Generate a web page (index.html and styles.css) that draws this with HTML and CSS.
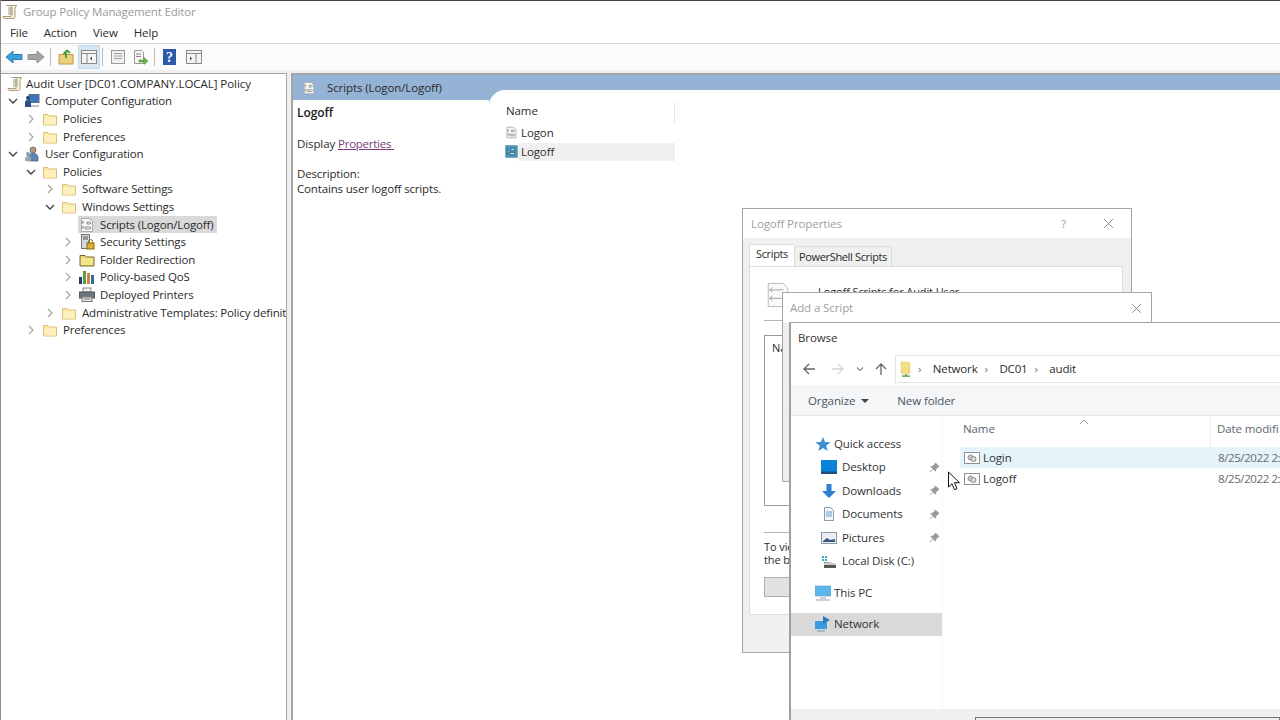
FILE: index.html
```html
<!DOCTYPE html>
<html lang="en">
<head>
<meta charset="utf-8">
<title>Group Policy Management Editor</title>
<link rel="stylesheet" href="styles.css">
</head>
<body>
<svg class="defs" width="0" height="0" aria-hidden="true">
  <defs>
    <symbol id="folder" viewBox="0 0 16 16">
      <path d="M1.500 3.500h4.500l1.500 1.500h7v9h-13z" fill="#fbe7a0" stroke="#d8c27a"/>
      <path d="M2 6h12v7.500H2z" fill="#fdf0bc"/>
    </symbol>
    <symbol id="script" viewBox="0 0 16 16">
      <path d="M2.500 1.500h8l3 3v10h-11z" fill="#f8f8f8" stroke="#a8a8a8"/>
      <path d="M5 4.500H3.800v2.500M5 9.500H3.800v2.500M8 5h3l1 1-1 1H8zM6 10h5l1 1-1 1H6z" fill="none" stroke="#8d8d8d"/>
    </symbol>
    <symbol id="scriptsel" viewBox="0 0 16 16">
      <rect x="1" y="1" width="14" height="14" fill="#4f9fc0" stroke="#2f7f9f"/>
      <path d="M4 4.500H3v2.500M4 9.500H3v2.500M7 4h5v3H7zM6 9h6v3H6z" fill="#cfe8f2" stroke="#1d4f66"/>
    </symbol>
    <symbol id="scrollicon" viewBox="0 0 16 16">
      <path d="M4.500 1.500h10l-1.500 3v8c0 1.500-1 2-2 2h-8c-1.500 0-2-1-2-2h8V3c0-1 .5-1.500 1.500-1.500z" fill="#f7f2e2" stroke="#a89c7c"/>
      <path d="M6 4h5M6 6h5M6 8h5M6 10h5" stroke="#a89c7c"/>
    </symbol>
    <symbol id="computer" viewBox="0 0 16 16">
      <rect x="5" y="1.500" width="10" height="8" fill="#3f76b8" stroke="#5d6f85"/>
      <path d="M7 12h8v2H7z" fill="#b8c4d0"/>
      <circle cx="4" cy="5" r="2" fill="#24437a"/>
      <path d="M1 14V9c0-1 1-2 3-2s3 1 3 2v5z" fill="#2c4f8a"/>
    </symbol>
    <symbol id="users" viewBox="0 0 16 16">
      <circle cx="9" cy="4" r="3" fill="#b59a7a" stroke="#5d5048" stroke-width=".7"/>
      <path d="M4 15v-4c0-2 2-3.500 5-3.500s5 1.500 5 3.500v4z" fill="#5f87b5" stroke="#3f5c80" stroke-width=".7"/>
      <circle cx="4" cy="8" r="2" fill="#8b9bad"/>
      <path d="M1 15v-2.500C1 11 2.500 10 4 10s3 1 3 2.500V15z" fill="#9aa7b5"/>
    </symbol>
    <symbol id="lockserver" viewBox="0 0 16 16">
      <rect x="2.500" y=".5" width="8" height="14" fill="#d5d8dc" stroke="#777"/>
      <path d="M4 3h5M4 5h5" stroke="#555"/>
      <rect x="8" y="9" width="7" height="6" fill="#dcb13a" stroke="#8c6c12"/>
      <path d="M9.500 9V7.500a2 2 0 0 1 4 0V9" fill="none" stroke="#8c6c12"/>
    </symbol>
    <symbol id="redirect" viewBox="0 0 16 16">
      <path d="M1 3.500h5l1.500 1.500H15v9H1z" fill="#ecd772" stroke="#6f6a2e"/>
      <path d="M2 6h12v7H2z" fill="#f3e48e"/>
    </symbol>
    <symbol id="bars" viewBox="0 0 16 16">
      <rect x="0" y="8" width="3" height="7" fill="#1f3f66"/>
      <rect x="4" y="2" width="3" height="13" fill="#5c9c4c"/>
      <rect x="8" y="4" width="3" height="11" fill="#c88a3a"/>
      <rect x="12" y="6" width="3" height="9" fill="#2f6f9f"/>
    </symbol>
    <symbol id="printer" viewBox="0 0 16 16">
      <rect x="4" y="1" width="8" height="4" fill="#f4f4f4" stroke="#888"/>
      <rect x=".5" y="5" width="15" height="6" fill="#6d747a" stroke="#555"/>
      <rect x="3" y="10" width="10" height="4.500" fill="#e8e8e8" stroke="#777"/>
      <path d="M4.500 12h7" stroke="#777"/>
    </symbol>
    <symbol id="chev-r" viewBox="0 0 10 10"><path d="M3 1l4 4-4 4" fill="none" stroke="#a6a6a6" stroke-width="1.200"/></symbol>
    <symbol id="chev-d" viewBox="0 0 10 10"><path d="M1 3l4 4 4-4" fill="none" stroke="#404040" stroke-width="1.300"/></symbol>
    <symbol id="pin" viewBox="0 0 12 12"><path d="M7 1l4 4-1.500.5L7.500 8 7 10 2 5l2-.5 2.500-2zM4 8l-3 3" fill="#9a9a9a" stroke="#9a9a9a"/></symbol>
    <symbol id="share" viewBox="0 0 16 16">
      <path d="M3 1h4.500L11 1.500c.8 0 1 .5 1 1.500v7.500c0 1.500-.5 2.500-1.500 2.500h-6c-1 0-1.500-1-1.500-2.500z" fill="#f6de86" stroke="#dcc470" stroke-width=".5"/>
      <path d="M8 13v2M4 15.200h8" stroke="#3c9a3c" stroke-width="1.300"/>
    </symbol>
    <symbol id="batch" viewBox="0 0 16 16">
      <rect x=".5" y="2.500" width="15" height="11" fill="#fff" stroke="#909090"/>
      <circle cx="6.500" cy="7.500" r="2.500" fill="#ccc" stroke="#8a8a8a"/>
      <circle cx="9.500" cy="9" r="2.500" fill="#ddd" stroke="#8a8a8a"/>
    </symbol>
  </defs>
</svg>

<header class="titlebar">
  <svg class="ico16"><use href="#scrollicon"/></svg>
  <span>Group Policy Management Editor</span>
</header>
<nav class="menubar">
  <span>File</span><span>Action</span><span>View</span><span>Help</span>
</nav>
<div class="toolbar">
  <svg class="tool" viewBox="0 0 18 16"><path d="M1 8l7-6v3.500h9v5H8V14z" fill="#3aa0dc" stroke="#2b7fb5"/></svg>
  <svg class="tool" viewBox="0 0 18 16"><path d="M17 8l-7-6v3.500H1v5h9V14z" fill="#a5a5a5" stroke="#8c8c8c"/></svg>
  <i class="tsep"></i>
  <svg class="tool" viewBox="0 0 18 16"><path d="M2 5.500h14V15H2z" fill="#ecd27a" stroke="#b79d4c"/><path d="M9 9V3.500M6.500 5l3.500-3.500L13 4" fill="none" stroke="#4a9c3c" stroke-width="1.800"/></svg>
  <span class="tool-on"><svg class="tool" viewBox="0 0 18 16"><rect x="1.500" y="1.500" width="15" height="13" fill="#f4f4f4" stroke="#8a8a8a"/><path d="M1.500 4.500h15M7 4.500v10" stroke="#8a8a8a"/><path d="M12 7.500v4l-2-2z" fill="#445"/></svg></span>
  <i class="tsep"></i>
  <svg class="tool" viewBox="0 0 18 16"><rect x="2.500" y="1.500" width="13" height="13" fill="#eef1f4" stroke="#9a9a9a"/><path d="M5 4.500h8M5 7h8M5 9.500h8" stroke="#a0a0a0"/></svg>
  <svg class="tool" viewBox="0 0 18 16"><path d="M3.500 1.500h7l2 2v11h-9z" fill="#f6f6f6" stroke="#9a9a9a"/><path d="M5 5h5M5 7.500h5" stroke="#888"/><path d="M8 11h5V8.500l4 3.500-4 3.500V13H8z" fill="#6ab04c" stroke="#4c8a34" stroke-width=".5"/></svg>
  <i class="tsep"></i>
  <svg class="tool" viewBox="0 0 18 16"><rect x="2" y="0" width="13" height="16" fill="#2a5aa8"/><text x="8.500" y="13" class="helpq">?</text></svg>
  <svg class="tool tool-last" viewBox="0 0 18 16"><rect x="1.500" y="1.500" width="15" height="13" fill="#f4f4f4" stroke="#8a8a8a"/><path d="M1.500 4.500h15M11 4.500v10" stroke="#8a8a8a"/><path d="M5 7.500v4L7 9.500z" fill="#445"/></svg>
</div>

<main class="console">
  <section class="tree">
    <div class="row root"><svg class="ico16"><use href="#scrollicon"/></svg><span>Audit User [DC01.COMPANY.LOCAL] Policy</span></div>
    <div class="row d0"><svg class="chev"><use href="#chev-d"/></svg><svg class="ico16"><use href="#computer"/></svg><span>Computer Configuration</span></div>
    <div class="row d1"><svg class="chev"><use href="#chev-r"/></svg><svg class="ico16"><use href="#folder"/></svg><span>Policies</span></div>
    <div class="row d1"><svg class="chev"><use href="#chev-r"/></svg><svg class="ico16"><use href="#folder"/></svg><span>Preferences</span></div>
    <div class="row d0"><svg class="chev"><use href="#chev-d"/></svg><svg class="ico16"><use href="#users"/></svg><span>User Configuration</span></div>
    <div class="row d1"><svg class="chev"><use href="#chev-d"/></svg><svg class="ico16"><use href="#folder"/></svg><span>Policies</span></div>
    <div class="row d2"><svg class="chev"><use href="#chev-r"/></svg><svg class="ico16"><use href="#folder"/></svg><span>Software Settings</span></div>
    <div class="row d2"><svg class="chev"><use href="#chev-d"/></svg><svg class="ico16"><use href="#folder"/></svg><span>Windows Settings</span></div>
    <div class="row d3"><span class="chev"></span><span class="sel"><svg class="ico16"><use href="#script"/></svg><span>Scripts (Logon/Logoff)</span></span></div>
    <div class="row d3"><svg class="chev"><use href="#chev-r"/></svg><svg class="ico16"><use href="#lockserver"/></svg><span>Security Settings</span></div>
    <div class="row d3"><svg class="chev"><use href="#chev-r"/></svg><svg class="ico16"><use href="#redirect"/></svg><span>Folder Redirection</span></div>
    <div class="row d3"><svg class="chev"><use href="#chev-r"/></svg><svg class="ico16"><use href="#bars"/></svg><span>Policy-based QoS</span></div>
    <div class="row d3"><svg class="chev"><use href="#chev-r"/></svg><svg class="ico16"><use href="#printer"/></svg><span>Deployed Printers</span></div>
    <div class="row d2"><svg class="chev"><use href="#chev-r"/></svg><svg class="ico16"><use href="#folder"/></svg><span>Administrative Templates: Policy definit</span></div>
    <div class="row d1"><svg class="chev"><use href="#chev-r"/></svg><svg class="ico16"><use href="#folder"/></svg><span>Preferences</span></div>
  </section>

  <section class="pane">
    <div class="pane-head"><svg class="ico14"><use href="#script"/></svg><span>Scripts (Logon/Logoff)</span></div>
    <div class="pane-body">
      <div class="desc">
        <h2>Logoff</h2>
        <p class="display">Display <a class="link">Properties&nbsp;</a></p>
        <p class="about">Description:<br>Contains user logoff scripts.</p>
      </div>
      <div class="list">
        <div class="list-head"><span>Name</span></div>
        <div class="list-row"><svg class="ico13"><use href="#script"/></svg><span class="lbl">Logon</span></div>
        <div class="list-row"><svg class="ico13"><use href="#scriptsel"/></svg><span class="lbl on">Logoff</span></div>
      </div>
    </div>
  </section>
</main>

<section class="win props">
  <div class="win-title"><span>Logoff Properties</span><b class="q">?</b><svg class="x" viewBox="0 0 10 10"><path d="M0 0l10 10M10 0L0 10"/></svg></div>
  <div class="tabs"><span class="tab on">Scripts</span><span class="tab">PowerShell Scripts</span></div>
  <div class="page">
    <div class="page-head">
      <svg class="bigscript" viewBox="0 0 24 28"><path d="M1.500 1.500h16l5 5v20h-21z" fill="#fafafa" stroke="#b5b5b5"/><path d="M6 6L3 8.500 6 11M3 8.500h15M6 15l-3 2.500L6 20M3 17.500h15" fill="none" stroke="#9a9a9a"/></svg>
      <span>Logoff Scripts for Audit User</span>
    </div>
    <hr class="rule">
    <div class="scriptbox">Na</div>
    <hr class="rule rule2">
    <p class="hint">To vie<br>the bu</p>
    <div class="btn"></div>
  </div>
</section>

<section class="win add">
  <div class="win-title"><span>Add a Script</span><svg class="x" viewBox="0 0 10 10"><path d="M0 0l10 10M10 0L0 10"/></svg></div>
</section>

<section class="win browse">
  <div class="browse-title">Browse</div>
  <div class="nav">
    <svg class="navbtn" viewBox="0 0 14 14"><path d="M13 7H2M7 2L2 7l5 5" fill="none" stroke="#666" stroke-width="1.300"/></svg>
    <svg class="navbtn" viewBox="0 0 14 14"><path d="M1 7h11M7 2l5 5-5 5" fill="none" stroke="#d4d4d4" stroke-width="1.300"/></svg>
    <svg class="navdrop" viewBox="0 0 8 8"><path d="M1 2.500l3 3 3-3" fill="none" stroke="#888" stroke-width="1.100"/></svg>
    <svg class="navbtn up" viewBox="0 0 14 14"><path d="M7 13V2M2 7l5-5 5 5" fill="none" stroke="#666" stroke-width="1.300"/></svg>
    <div class="address">
      <svg class="ico16"><use href="#share"/></svg>
      <span class="crumb-sep">&rsaquo;</span><span>Network</span>
      <span class="crumb-sep">&rsaquo;</span><span>DC01</span>
      <span class="crumb-sep">&rsaquo;</span><span>audit</span>
    </div>
  </div>
  <div class="cmdbar">
    <span class="org">Organize<i class="caret"></i></span>
    <span>New folder</span>
  </div>
  <div class="explorer">
    <aside class="side">
      <div class="s-item top"><svg class="ico16" viewBox="0 0 16 16"><path d="M8 1l2 5 5.500.3-4.300 3.400 1.500 5.300L8 12l-4.700 3 1.500-5.300L.5 6.300 6 6z" fill="#3d8fd1"/></svg><span>Quick access</span></div>
      <div class="s-item sub"><svg class="ico16" viewBox="0 0 16 16"><rect y="1" width="16" height="13" fill="#0a84d8"/><path d="M0 12.500h16V15H0z" fill="#1d4f7a"/></svg><span>Desktop</span><svg class="pin"><use href="#pin"/></svg></div>
      <div class="s-item sub"><svg class="ico16" viewBox="0 0 16 16"><path d="M5.500 1h5v7H15l-7 7-7-7h4.500z" fill="#2f7fd0"/></svg><span>Downloads</span><svg class="pin"><use href="#pin"/></svg></div>
      <div class="s-item sub"><svg class="ico16" viewBox="0 0 16 16"><path d="M3.500 1.500h6l3 3v10h-9z" fill="#f4f6f8" stroke="#8a9aaa"/><path d="M5 6h6M5 8h6M5 10h6" stroke="#6b9cc8"/></svg><span>Documents</span><svg class="pin"><use href="#pin"/></svg></div>
      <div class="s-item sub"><svg class="ico16" viewBox="0 0 16 16"><rect x=".5" y="2.500" width="15" height="11" fill="#e8eef4" stroke="#8a9aaa"/><path d="M2 11l4-3 3 2 5-1v3H2z" fill="#3d5a78"/></svg><span>Pictures</span><svg class="pin"><use href="#pin"/></svg></div>
      <div class="s-item sub"><svg class="ico16" viewBox="0 0 16 16"><path d="M1 3h2v2H1zM4 3h2v2H4zM1 6h2v2H1zM4 6h2v2H4z" fill="#35a7c8"/><path d="M3 9l9 1 3 2v3H3z" fill="#555"/><path d="M3 9.500l9 .5 3 2H3z" fill="#ccc"/></svg><span>Local Disk (C:)</span></div>
      <div class="s-item top gap"><svg class="ico16" viewBox="0 0 16 16"><rect y="1" width="16" height="10" fill="#5bb6ee" stroke="#7a9ab5" stroke-width=".6"/><path d="M5 13h6M1 15h14" stroke="#9aa5ae" stroke-width="1.200"/></svg><span>This PC</span></div>
      <div class="s-item top gap active"><svg class="ico16" viewBox="0 0 16 16"><rect y="5" width="12" height="8" fill="#3b9ae0"/><path d="M8 0l7 4-7 4z" fill="#2a7cc0"/><path d="M2 15h8" stroke="#6a94b5"/></svg><span>Network</span></div>
    </aside>
    <div class="files">
      <div class="file-head"><span class="col-name">Name</span><span class="col-date">Date modifi</span><svg class="sort" viewBox="0 0 10 6"><path d="M1 5l4-4 4 4" fill="none" stroke="#999"/></svg></div>
      <div class="file on"><svg class="fileicon"><use href="#batch"/></svg><span class="col-label">Login</span><span class="col-date">8/25/2022 2:</span></div>
      <div class="file"><svg class="fileicon"><use href="#batch"/></svg><span class="col-label">Logoff</span><span class="col-date">8/25/2022 2:</span></div>
    </div>
  </div>
  <div class="browse-foot"><div class="namebox"></div></div>
</section>

<svg class="cursor" viewBox="0 0 12 20"><path d="M1 1v15l3.500-3.300 2.500 6 2.500-1-2.500-6h5z" fill="#fff" stroke="#111"/></svg>
</body>
</html>
```
FILE: styles.css
```css
html, body { margin: 0; height: 720px; overflow: hidden; }
body {
  display: flex;
  flex-direction: column;
  background: #fff;
  color: #2b2b2b;
  font: 11.500px/16px "Open Sans", "Noto Sans", sans-serif;
  letter-spacing: -.1px;
  border-left: 1px solid #8c8c8c;
  box-sizing: border-box;
}
.defs { position: absolute; }
svg { flex: none; display: block; }
p, h2, hr { margin: 0; }
.ico16 { width: 16px; height: 16px; }
.ico14 { width: 14px; height: 14px; }
.ico13 { width: 13px; height: 13px; }

.titlebar { height: 22px; flex: none; display: flex; align-items: center; gap: 5px; padding-left: 1px; color: #9a9a9a; border-top: 1px solid #444; box-sizing: border-box; letter-spacing: -.15px; }
.menubar { height: 22px; flex: none; display: flex; align-items: center; padding-left: 9px; gap: 16px; border-bottom: 1px solid #d8d8d8; box-sizing: border-box; }
.toolbar { height: 26px; flex: none; display: flex; align-items: center; padding-left: 2px; background: #fbfbfb; }
.tool { width: 18px; height: 16px; margin: 0 2px; }
.tool-on { background: #d6e6f3; border: 1px solid #c6dbec; width: 20px; height: 22px; display: flex; align-items: center; justify-content: center; margin: 0 -1px 0 1px; }
.tool-on .tool { margin: 0; }
.tsep { width: 1px; height: 18px; background: #bdbdbd; margin: 0 4px 0 3px; }
.tool-last { margin-left: 4px; }
.helpq { font: bold 14px "Liberation Serif", serif; fill: #fff; text-anchor: middle; }

.console { flex: 1; display: flex; background: #f0f0f0; padding-top: 3px; min-height: 0; }
.tree { width: 286px; background: #fff; border: 1px solid #a5a5a5; border-width: 1px 1px 0 0; padding-top: 1px; overflow: hidden; box-sizing: border-box; flex: none; letter-spacing: -.16px; }
.row { height: 17.6px; display: flex; align-items: center; white-space: nowrap; }
.root { padding-left: 6px; gap: 3px; letter-spacing: -.05px; }
.d0 { padding-left: 3px; }
.d1 { padding-left: 21px; }
.d2 { padding-left: 40px; }
.d3 { padding-left: 58px; }
.chev { width: 10px; height: 10px; margin: 0 5px 0 4px; flex: none; }
.row > .ico16 { margin-right: 5px; margin-left: 1px; }
.root > .ico16 { margin: 0; }
.sel { display: flex; align-items: center; gap: 5px; background: #d9d9d9; padding: 0 4px 0 1px; height: 17.6px; }

.pane { flex: 1; margin-left: 4px; border: 2px solid #a5a5a5; border-width: 2px 0 0 2px; background: #94b3d5; display: flex; flex-direction: column; min-width: 0; }
.pane-head { height: 25px; flex: none; display: flex; align-items: center; gap: 11px; padding-left: 9px; color: #2b2b2b; }
.pane-body { flex: 1; display: flex; margin-top: -10px; }
.desc { width: 196px; margin-top: 10px; background: #fff; padding: 5px 0 0 4px; box-sizing: border-box; }
.desc h2 { font-size: 12px; font-weight: 600; line-height: 16px; color: #222; }
.display { margin: 15px 0 14px; }
.about { line-height: 15px; letter-spacing: -.16px; }
.link { color: #7c3a7c; text-decoration: underline; letter-spacing: -.25px; }
.list { flex: 1; background: #fff; border-top-left-radius: 16px; padding: 12px 0 0 16px; }
.list-head { width: 170px; height: 21px; display: flex; align-items: center; border-right: 1px solid #e8e8e8; box-sizing: border-box; padding: 0 0 3px 1px; }
.list-row { display: flex; align-items: center; width: 170px; height: 19px; }
.lbl { flex: 1; padding-left: 3px; line-height: 18px; }
.lbl.on { background: #f0f0f0; }

.win { position: absolute; box-sizing: border-box; }
.props { left: 742px; top: 208px; width: 390px; height: 445px; background: #f0f0f0; border: 1px solid #a5a5a5; }
.win-title { height: 29px; display: flex; align-items: center; padding-left: 8px; background: #fff; color: #a0a0a0; }
.win-title span { flex: 1; }
.q { font-weight: 400; margin-right: 38px; color: #9a9a9a; }
.x { width: 9px; height: 9px; margin-right: 18px; }
.x path { stroke: #8a8a8a; fill: none; }
.tabs { display: flex; height: 28px; padding: 8px 0 0 6px; box-sizing: border-box; align-items: flex-end; }
.tab { font-size: 11px; height: 19px; line-height: 19px; padding: 0 4px; letter-spacing: -.35px; border: 1px solid #dcdcdc; border-bottom: 0; background: #f0f0f0; }
.tab.on { background: #fff; height: 21px; padding: 0 6px; border-right: 0; line-height: 18px; }
.page { margin-left: 6px; width: 374px; height: 349px; background: #fff; border: 1px solid #dcdcdc; box-sizing: border-box; padding: 15px 0 0 14px; }
.page-head { display: flex; gap: 28px; height: 40px; }
.bigscript { width: 24px; height: 26px; margin-left: 2px; }
.page-head span { padding-top: 2px; font-size: 11px; }
.rule { width: 150px; border: 0; border-top: 1px solid #b5b5b5; margin-top: -2px; }
.scriptbox { margin-top: 14px; width: 350px; height: 171px; border: 1px solid #9a9a9a; box-sizing: border-box; padding: 4px 7px; font-size: 11px; }
.rule2 { margin-top: 26px; }
.hint { margin-top: 7px; font-size: 11px; line-height: 13px; white-space: nowrap; }
.btn { margin-top: 11px; width: 150px; height: 20px; background: #e1e1e1; border: 1px solid #adadad; box-sizing: border-box; }

.add { left: 782px; top: 292px; width: 370px; height: 190px; border: 1px solid #a5a5a5; background: #eeeeee; }
.add .win-title { height: 30px; padding-left: 7px; }
.add .x { margin-right: 10px; }

.browse { left: 789px; top: 322px; width: 491px; height: 398px; background: #fff; border: 1px solid #a0a0a0; border-width: 1px 0 0 2px; display: flex; flex-direction: column; overflow: hidden; }
.browse-title { height: 30px; display: flex; align-items: center; padding-left: 7px; flex: none; color: #333; }
.nav { height: 32px; display: flex; align-items: center; padding-left: 11px; flex: none; }
.navbtn { width: 14px; height: 14px; margin-right: 15px; }
.navdrop { width: 8px; height: 8px; margin: 0 10px 0 -4px; }
.navbtn.up { margin-right: 7px; }
.address { flex: 1; height: 26px; border: 1px solid #e4e4e4; border-right: 0; display: flex; align-items: center; padding-left: 2px; letter-spacing: -.15px; }
.address .ico16 { margin-right: -3px; }
.crumb-sep { color: #777; margin: 0 11.500px 0 7px; }
.cmdbar { height: 31px; background: #f5f6f7; border-bottom: 1px solid #e6e6e6; display: flex; align-items: center; padding: 2px 0 0 17px; gap: 28px; color: #4a5560; flex: none; box-sizing: border-box; }
.org { display: flex; align-items: center; gap: 6px; }
.caret { border: 4px solid transparent; border-top-color: #444; border-bottom: 0; width: 0; height: 0; }
.explorer { flex: 1; display: flex; min-height: 0; }
.side { width: 151px; flex: none; padding-top: 16px; border-right: 1px solid #f6f6f6; }
.s-item { height: 23.500px; display: flex; align-items: center; gap: 5px; color: #333; padding-right: 2px; }
.s-item > span { flex: 1; }
.top { padding-left: 24px; gap: 3px; }
.sub { padding-left: 30px; }
.gap { margin-top: 8px; }
.active { background: #d9d9d9; }
.pin { width: 11px; height: 11px; }
.files { flex: 1; position: relative; min-width: 0; padding-left: 18px; }
.file-head { height: 31px; display: flex; align-items: flex-start; color: #5a6670; white-space: nowrap; position: relative; line-height: 26px; }
.col-name { width: 250px; flex: none; padding-left: 2px; border-right: 1px solid #eee; height: 31px; box-sizing: border-box; }
.file-head .col-date { padding-left: 6px; }
.sort { position: absolute; left: 118px; top: 3px; width: 10px; height: 6px; }
.file { height: 21px; display: flex; align-items: center; margin-left: -1px; white-space: nowrap; color: #333; }
.file.on { background: #e5f3fb; }
.fileicon { width: 16px; height: 16px; margin: 0 3px 0 4px; }
.col-label { width: 235px; flex: none; }
.file .col-date { color: #6a6a6a; letter-spacing: -.4px; }
.browse-foot { height: 11px; background: #f0f0f0; flex: none; padding: 8px 0 0 184px; box-sizing: border-box; }
.namebox { height: 5px; border: 1px solid #777; border-bottom: 0; }

.cursor { position: absolute; left: 947px; top: 471px; width: 13px; height: 20px; }
```
